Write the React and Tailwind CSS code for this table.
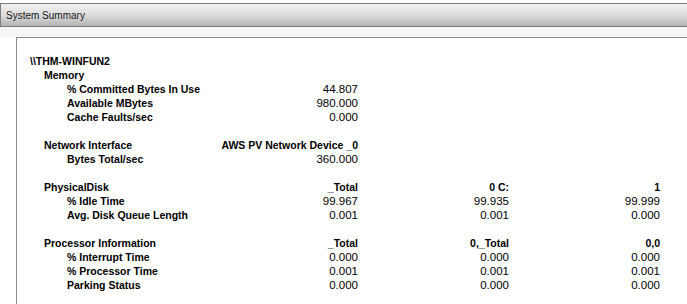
import React from "react";

const groups = [
  {
    name: "Memory",
    heads: [],
    rows: [
      { label: "% Committed Bytes In Use", values: ["44.807"] },
      { label: "Available MBytes", values: ["980.000"] },
      { label: "Cache Faults/sec", values: ["0.000"] },
    ],
  },
  {
    name: "Network Interface",
    heads: ["AWS PV Network Device _0"],
    rows: [{ label: "Bytes Total/sec", values: ["360.000"] }],
  },
  {
    name: "PhysicalDisk",
    heads: ["_Total", "0 C:", "1"],
    rows: [
      { label: "% Idle Time", values: ["99.967", "99.935", "99.999"] },
      { label: "Avg. Disk Queue Length", values: ["0.001", "0.001", "0.000"] },
    ],
  },
  {
    name: "Processor Information",
    heads: ["_Total", "0,_Total", "0,0"],
    rows: [
      { label: "% Interrupt Time", values: ["0.000", "0.000", "0.000"] },
      { label: "% Processor Time", values: ["0.001", "0.001", "0.001"] },
      { label: "Parking Status", values: ["0.000", "0.000", "0.000"] },
    ],
  },
];

function Row({ label, indent, values = [], bold }) {
  return (
    <div className="flex h-[14px] items-center whitespace-nowrap">
      <div className={`w-[177px] shrink-0 font-bold text-[10.5px] ${indent}`}>{label}</div>
      {values.map((v, i) => (
        <div
          key={i}
          className={`w-[151px] shrink-0 text-right ${bold ? "font-bold text-[10.5px]" : "text-[11.5px]"}`}
        >
          {v}
        </div>
      ))}
    </div>
  );
}

export default function App() {
  return (
    <div className="h-[304px] w-[687px] overflow-hidden bg-white text-black" style={{ fontFamily: '"Liberation Sans", Arial, sans-serif' }}>
      <div className="mt-[3px] flex h-[24px] items-center border-y border-l border-[#7d7d7d] bg-gradient-to-b from-[#f2f2f2] via-[#dcdcdc] to-[#b4b4b4] pl-[5px] text-[10px] text-[#1a1a1a]">
        System Summary
      </div>
      <div className="h-[10px] bg-[#f6f6f6]" />
      <div className="ml-[16px] h-[300px] border-l border-t border-[#8a8a8a] pt-[17px] pl-[13px]">
        <Row label={"\\\\THM-WINFUN2"} indent="" />
        {groups.map((g, gi) => (
          <div key={g.name} className={gi > 0 ? "mt-[14px]" : ""}>
            <Row label={g.name} indent="pl-[14px]" values={g.heads} bold />
            {g.rows.map((r) => (
              <Row key={r.label} label={r.label} indent="pl-[37px]" values={r.values} />
            ))}
          </div>
        ))}
      </div>
    </div>
  );
}
